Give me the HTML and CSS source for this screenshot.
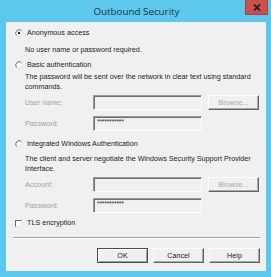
FILE: index.html
```html
<!DOCTYPE html>
<html>
<head>
<meta charset="utf-8">
<link rel="stylesheet" href="styles.css">
</head>
<body>
<div class="window">
  <div class="titlebar">
    <span class="title">Outbound Security</span>
    <div class="close"><svg width="8" height="7" viewBox="0 0 8 7"><path d="M1 0.5 L7 6.5 M7 0.5 L1 6.5" stroke="#1a1a1a" stroke-width="1.7"/></svg></div>
  </div>
  <div class="client">
    <div class="opt first">
      <svg class="radio" width="8" height="8" viewBox="0 0 8 8"><circle cx="4" cy="4" r="3.4" fill="#fff"/><path d="M1.6 6.4 A3.4 3.4 0 0 1 6.4 1.6" stroke="#6a6a6a" stroke-width="1" fill="none"/><path d="M6.4 1.6 A3.4 3.4 0 0 1 1.6 6.4" stroke="#d8d8d8" stroke-width="1" fill="none"/><circle cx="4" cy="4" r="1.2" fill="#222"/></svg>
      <span>Anonymous access</span>
    </div>
    <div class="desc d1">No user name or password required.</div>
    <div class="opt o2">
      <svg class="radio" width="8" height="8" viewBox="0 0 8 8"><circle cx="4" cy="4" r="3.4" fill="#fff"/><path d="M1.6 6.4 A3.4 3.4 0 0 1 6.4 1.6" stroke="#6a6a6a" stroke-width="1" fill="none"/><path d="M6.4 1.6 A3.4 3.4 0 0 1 1.6 6.4" stroke="#d8d8d8" stroke-width="1" fill="none"/></svg>
      <span>Basic authentication</span>
    </div>
    <div class="desc d2">The password will be sent over the network in clear text using standard commands.</div>
    <div class="field f1">
      <span class="lbl">User name:</span>
      <span class="input"></span>
      <span class="btn disabled">Browse...</span>
    </div>
    <div class="field f2">
      <span class="lbl">Password:</span>
      <span class="input pw">***********</span>
    </div>
    <div class="opt o3">
      <svg class="radio" width="8" height="8" viewBox="0 0 8 8"><circle cx="4" cy="4" r="3.4" fill="#fff"/><path d="M1.6 6.4 A3.4 3.4 0 0 1 6.4 1.6" stroke="#6a6a6a" stroke-width="1" fill="none"/><path d="M6.4 1.6 A3.4 3.4 0 0 1 1.6 6.4" stroke="#d8d8d8" stroke-width="1" fill="none"/></svg>
      <span>Integrated Windows Authentication</span>
    </div>
    <div class="desc d3">The client and server negotiate the Windows Security Support Provider Interface.</div>
    <div class="field f1">
      <span class="lbl">Account:</span>
      <span class="input"></span>
      <span class="btn disabled">Browse...</span>
    </div>
    <div class="field f2">
      <span class="lbl">Password:</span>
      <span class="input pw">***********</span>
    </div>
    <div class="opt tls">
      <span class="check"></span>
      <span>TLS encryption</span>
    </div>
    <div class="sep"></div>
    <div class="buttons">
      <span class="btn default">OK</span>
      <span class="btn">Cancel</span>
      <span class="btn">Help</span>
    </div>
  </div>
</div>
</body>
</html>
```
FILE: styles.css
```css
html, body {
  margin: 0;
  padding: 0;
}
body {
  width: 271px;
  height: 277px;
  overflow: hidden;
  font-family: "Liberation Sans", Arial, sans-serif;
  font-size: 7.2px;
  color: #1c1c1c;
}
.window {
  width: 271px;
  height: 277px;
  box-sizing: border-box;
  background: #5ec7ec;
  padding: 0 5px 6px 6px;
  display: flex;
  flex-direction: column;
}
.titlebar {
  height: 22px;
  position: relative;
  display: flex;
  align-items: center;
  justify-content: center;
}
.title {
  font-family: "Open Sans", "Noto Sans", sans-serif;
  font-size: 9.8px;
  color: #17334b;
  margin-left: 1px;
}
.close {
  position: absolute;
  top: 0;
  right: -2px;
  width: 23px;
  height: 15px;
  box-sizing: border-box;
  background: #c9514d;
  border: 1px solid #a84440;
  border-top: none;
  display: flex;
  align-items: center;
  justify-content: center;
}
.client {
  flex: 1;
  background: #f0f0f0;
  display: flex;
  flex-direction: column;
  padding: 0 6px 0 9px;
  line-height: 10px;
}
.opt {
  display: flex;
  align-items: center;
  height: 10px;
}
.opt .radio {
  margin-right: 4px;
  flex: none;
}
.first { margin-top: 6px; }
.o2 { margin-top: 5px; }
.o3 { margin-top: 8px; }
.tls { margin-top: 5px; }
.desc {
  margin-left: 10px;
  width: 236px;
}
.d1 { margin-top: 7px; }
.d2 { margin-top: 2px; }
.d3 { margin-top: 5px; }
.field {
  display: flex;
  align-items: flex-start;
  height: 15px;
}
.f1 { margin-top: 3px; }
.f2 { margin-top: 6px; }
.lbl {
  color: #a3a3a3;
  width: 68px;
  margin-left: 10px;
  line-height: 15px;
}
.input {
  width: 109px;
  height: 15px;
  box-sizing: border-box;
  border: 1px solid;
  border-color: #9a9a9a #fdfdfd #fdfdfd #9a9a9a;
  box-shadow: inset 1px 1px 0 #6f6f6f;
  background: #f0f0f0;
}
.pw {
  padding: 0 0 0 3px;
  line-height: 9px;
  font-size: 7px;
  color: #333;
  letter-spacing: -0.3px;
}
.btn {
  width: 51px;
  height: 15px;
  box-sizing: border-box;
  border: 1px solid;
  border-color: #fdfdfd #646464 #646464 #fdfdfd;
  box-shadow: inset -1px -1px 0 #a8a8a8;
  display: flex;
  align-items: center;
  justify-content: center;
  color: #1c1c1c;
}
.field .btn {
  margin-left: 6px;
}
.f1:first-of-type .btn { margin-top: 1px; }
.btn.disabled {
  color: #a8a8a8;
}
.check {
  width: 7px;
  height: 7px;
  box-sizing: border-box;
  border: 1px solid;
  border-color: #6a6a6a #e6e6e6 #e6e6e6 #6a6a6a;
  background: #fff;
  margin-right: 5px;
  flex: none;
}
.sep {
  margin: 9px 0 0 -2px;
  height: 1px;
  border-top: 1px solid #a0a0a0;
  border-bottom: 1px solid #fdfdfd;
  height: 0;
}
.buttons {
  margin-top: 9px;
  display: flex;
  justify-content: flex-end;
  gap: 5px;
}
.btn.default {
  border: 1px solid #4a4a4a;
  box-shadow: inset 1px 1px 0 #fdfdfd, inset -1px -1px 0 #a0a0a0;
}
```
